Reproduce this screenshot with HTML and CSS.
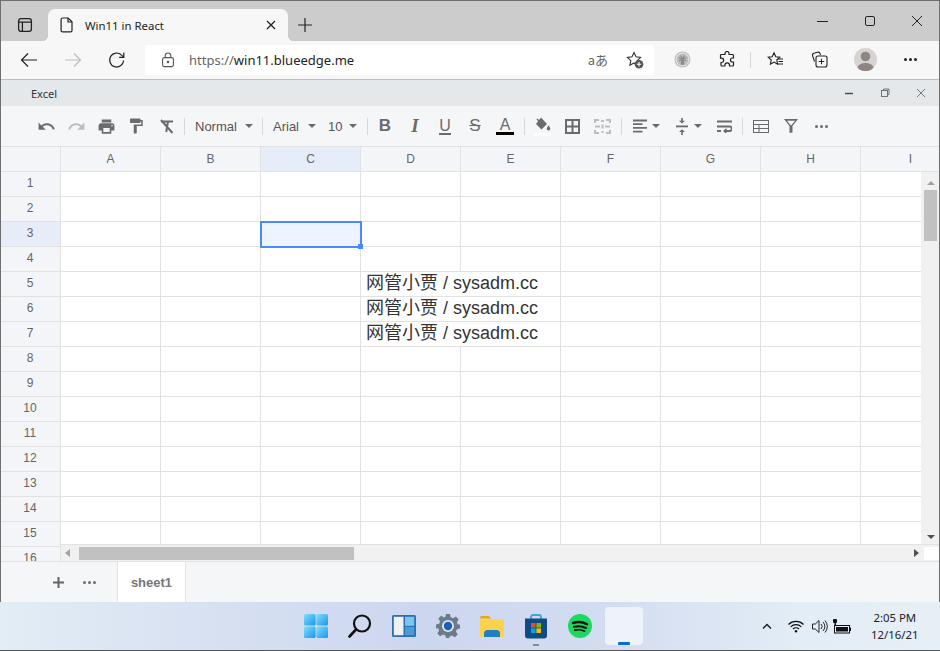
FILE: index.html
```html
<!DOCTYPE html>
<html lang="en">
<head>
    <meta charset="UTF-8">
    <meta name="viewport" content="width=device-width, initial-scale=1.0">
    <title>Win11 in React</title>
    <link rel="stylesheet" href="styles.css">
</head>
<body>
<div class="desktop">
    <div class="browser">
        <!-- tab strip -->
        <div class="tab-strip">
            <svg class="tab-panel-icon" width="16" height="16" viewBox="0 0 16 16" fill="none" stroke="#222" stroke-width="1.3"><rect x="1.6" y="1.6" width="12.8" height="12.8" rx="2.4"/><path d="M1.6 5.2h12.8M5.4 5.2v9.2"/></svg>
            <div class="tab">
                <svg width="14" height="16" viewBox="0 0 14 16" fill="none" stroke="#222" stroke-width="1.2"><path d="M2.6 1h5.6L12 4.8V13.4a1.5 1.5 0 0 1-1.5 1.5H2.6a1.5 1.5 0 0 1-1.5-1.5V2.5A1.5 1.5 0 0 1 2.6 1z"/><path d="M8 1v4h4"/></svg>
                <span class="tab-title">Win11 in React</span>
                <svg class="tab-close" width="10" height="10" viewBox="0 0 10 10" stroke="#222" stroke-width="1.3"><path d="M1 1l8 8M9 1l-8 8"/></svg>
            </div>
            <svg class="tab-new" width="16" height="16" viewBox="0 0 16 16" stroke="#222" stroke-width="1.2"><path d="M8 1v14M1 8h14"/></svg>
            <div class="win-controls">
                <svg width="12" height="12" viewBox="0 0 12 12" stroke="#222" stroke-width="1"><path d="M0 6.500h11"/></svg>
                <svg width="12" height="12" viewBox="0 0 12 12" fill="none" stroke="#222" stroke-width="1"><rect x="1.500" y="1.500" width="9" height="9" rx="1.500"/></svg>
                <svg width="12" height="12" viewBox="0 0 12 12" stroke="#222" stroke-width="1"><path d="M1 1l10 10M11 1L1 11"/></svg>
            </div>
        </div>

        <!-- address bar -->
        <div class="address-row">
            <svg class="nav-btn" width="18" height="16" viewBox="0 0 18 16" fill="none" stroke="#222" stroke-width="1.2"><path d="M17 8H1.5M8 1.5L1.5 8 8 14.5"/></svg>
            <svg class="nav-btn" width="18" height="16" viewBox="0 0 18 16" fill="none" stroke="#bdbdbd" stroke-width="1.2"><path d="M1 8h15.5M10 1.5L16.5 8 10 14.5"/></svg>
            <svg class="nav-btn" width="18" height="18" viewBox="0 0 18 18" fill="none" stroke="#222" stroke-width="1.2"><path d="M15.6 9.5a7 7 0 1 1-2-5.4l2.2 2.2"/><path d="M15.8 1.6v4.7h-4.7"/></svg>
            <div class="url-box">
                <svg width="14" height="16" viewBox="0 0 14 16" fill="none" stroke="#555" stroke-width="1.1"><rect x="1.6" y="5.6" width="10.8" height="9" rx="1.6"/><path d="M4.2 5.6V3.8a2.8 2.8 0 0 1 5.6 0v1.8"/><circle cx="7" cy="10" r=".8" fill="#555"/></svg>
                <span class="url"><span class="url-scheme">https://</span>win11.blueedge.me</span>
                <span class="translate">aあ</span>
                <svg class="fav-add" width="18" height="18" viewBox="0 0 18 18"><path d="M8 1.5l2 4.3 4.6.6-3.4 3.2.9 4.6L8 11.9l-4.1 2.3.9-4.6L1.400 6.400 6 5.800z" fill="none" stroke="#333" stroke-width="1.1"/><circle cx="13" cy="13.200" r="4.300" fill="#555"/><path d="M13 11v4.400M10.800 13.200h4.400" stroke="#fff" stroke-width="1.100"/></svg>
            </div>
            <div class="browser-tools">
                <svg class="tool-palm" width="17" height="17" viewBox="0 0 17 17"><circle cx="8.500" cy="8.500" r="8" fill="#bdbdbd"/><circle cx="8.500" cy="8.500" r="6.400" fill="none" stroke="#f4f4f4" stroke-width=".8"/><path d="M8 8h1l.6 5H7.400zM8.500 8L4.500 6.500M8.500 8l4-1.500M8.500 8L5 10M8.500 8l3.500 2M8.500 8L6.500 4.500M8.500 8l2-3.500" stroke="#8c8c8c" stroke-width="1.300" fill="#8c8c8c"/></svg>
                <svg class="tool-puzzle" width="16" height="17" viewBox="0 0 16 17" fill="none" stroke="#222" stroke-width="1.200"><path d="M6 2.500a2 2 0 0 1 4 0V3.500h3.500a1 1 0 0 1 1 1V7h-1a2 2 0 0 0 0 4h1v3a1 1 0 0 1-1 1H10.500v-.8a2.300 2.300 0 0 0-4.600 0v.8H3a1 1 0 0 1-1-1V11.500h.5a2.200 2.200 0 0 0 0-4.400H1.500V4.500a1 1 0 0 1 1-1H6z"/></svg>
                <span class="tool-sep"></span>
                <svg class="tool-favs" width="17" height="17" viewBox="0 0 17 17" fill="none" stroke="#222" stroke-width="1.100"><path d="M7 1.800l1.800 3.900 4 .5-3 2.800.8 4.200L7 11.100l-3.600 2.100.8-4.200-3-2.800 4-.5z"/><path d="M11 8h5M11.500 10.500h4.500M10.500 13h5.500"/></svg>
                <svg class="tool-coll" width="17" height="17" viewBox="0 0 17 17" fill="none" stroke="#222" stroke-width="1.100"><path d="M3.500 10.500L1.600 4.800a2 2 0 0 1 1.300-2.500l3.600-1.100a2 2 0 0 1 2.400 1L9.500 4"/><rect x="5" y="5" width="11" height="11" rx="2"/><path d="M10.500 7.800v5.400M7.800 10.500h5.400"/></svg>
                <svg class="tool-avatar" width="23" height="23" viewBox="0 0 23 23"><clipPath id="av"><circle cx="11.500" cy="11.500" r="11.500"/></clipPath><circle cx="11.500" cy="11.500" r="11.500" fill="#d6d3d1"/><g clip-path="url(#av)" fill="#8d8682"><circle cx="11.500" cy="8.500" r="4.800"/><ellipse cx="11.500" cy="20" rx="8" ry="5"/></g></svg>
                <span class="tool-more"><i></i><i></i><i></i></span>
            </div>
        </div>

        <!-- excel window title -->
        <div class="app-title">
            <span>Excel</span>
            <div class="app-controls">
                <svg width="10" height="10" viewBox="0 0 10 10" stroke="#444" stroke-width="1.400"><path d="M1 5.500h8"/></svg>
                <svg width="10" height="10" viewBox="0 0 10 10" fill="none" stroke="#666" stroke-width=".9"><rect x="1.500" y="2.500" width="6" height="6"/><path d="M3.500 2.500V1h5.500v5.500H7.500"/></svg>
                <svg width="10" height="10" viewBox="0 0 10 10" stroke="#777" stroke-width="1"><path d="M1 1l8 8M9 1L1 9"/></svg>
            </div>
        </div>

        <!-- sheet toolbar -->
        <div class="toolbar">
            <span class="btn"><svg width="19" height="19" viewBox="0 0 24 24" fill="#6b6b6b"><path d="M12.500 8c-2.650 0-5.050.99-6.900 2.600L2 7v9h9l-3.620-3.620c1.390-1.160 3.160-1.880 5.120-1.880 3.540 0 6.550 2.310 7.600 5.500l2.370-.78C21.080 11.030 17.150 8 12.500 8z"/></svg></span>
            <span class="btn"><svg width="19" height="19" viewBox="0 0 24 24" fill="#bdbdbd"><path d="M18.400 10.600C16.550 8.990 14.150 8 11.500 8c-4.650 0-8.580 3.030-9.960 7.220L3.900 16c1.050-3.190 4.050-5.500 7.600-5.500 1.950 0 3.730.72 5.120 1.880L13 16h9V7l-3.600 3.600z"/></svg></span>
            <span class="btn"><svg width="19" height="19" viewBox="0 0 24 24" fill="#6b6b6b"><path d="M19 8H5c-1.660 0-3 1.340-3 3v6h4v4h12v-4h4v-6c0-1.660-1.340-3-3-3zm-3 11H8v-5h8v5zm3-7c-.55 0-1-.45-1-1s.45-1 1-1 1 .45 1 1-.45 1-1 1zm-1-9H6v4h12V3z"/></svg></span>
            <span class="btn"><svg width="18" height="18" viewBox="0 0 24 24" fill="#6b6b6b"><path d="M18 4V3c0-.55-.45-1-1-1H5c-.55 0-1 .45-1 1v4c0 .55.45 1 1 1h12c.55 0 1-.45 1-1V6h1v4H9v11c0 .55.45 1 1 1h2c.55 0 1-.45 1-1v-9h8V4h-3z"/></svg></span>
            <span class="btn"><svg width="15" height="15" viewBox="0 0 15 15" fill="none" stroke="#6b6b6b" stroke-width="2"><path d="M2 2.500h12M9 2.500L7.200 13M2 1l11.500 13"/></svg></span>
            <span class="sep"></span>
            <span class="drop drop-style">Normal<i class="caret"></i></span>
            <span class="sep sep-flush"></span>
            <span class="drop drop-font">Arial<i class="caret"></i></span>
            <span class="drop drop-size">10<i class="caret"></i></span>
            <span class="sep sep-flush"></span>
            <span class="btn btn-first"><b class="glyph">B</b></span>
            <span class="btn"><b class="glyph glyph-i">I</b></span>
            <span class="btn"><b class="glyph glyph-u">U</b></span>
            <span class="btn"><b class="glyph glyph-s">S</b></span>
            <span class="btn"><b class="glyph glyph-a">A</b></span>
            <span class="sep sep-wide"></span>
            <span class="btn btn-first"><svg width="17" height="20" viewBox="0 0 17 20"><path d="M7 1.500L13 8l-5.500 5.500L2 8z" fill="#6b6b6b"/><path d="M3 3l2.500 2.500" stroke="#6b6b6b" stroke-width="1.500"/><path d="M14.500 9.500s1.800 2 1.800 3.200a1.800 1.800 0 0 1-3.600 0c0-1.200 1.800-3.200 1.800-3.200z" fill="#6b6b6b"/><rect x="0" y="17" width="17" height="3" fill="#fff"/></svg></span>
            <span class="btn"><svg width="15" height="15" viewBox="0 0 15 15" fill="none" stroke="#6b6b6b" stroke-width="2"><rect x="1" y="1" width="13" height="13"/><path d="M7.500 1v13M1 7.500h13"/></svg></span>
            <span class="btn"><svg width="17" height="15" viewBox="0 0 17 15" fill="none" stroke="#bdbdbd" stroke-width="2"><path d="M5 1H1v3M12 1h4v3M5 14H1v-3M12 14h4v-3M1 7.500h5M11 7.500h5M8 1v2M9 1v2M8.500 5.500v4M8.500 12v2"/></svg></span>
            <span class="sep sep-wide"></span>
            <span class="drop drop-align"><svg width="14" height="14" viewBox="0 0 14 14" stroke="#6b6b6b" stroke-width="1.800"><path d="M0 1.500h14M0 5.200h9.500M0 8.900h14M0 12.600h9.500"/></svg><i class="caret"></i></span>
            <span class="drop drop-valign"><svg width="12" height="17" viewBox="0 0 12 17" fill="#6b6b6b"><path d="M0 7.500h12v1.800H0z"/><path d="M6 5.500L3 2.800h2.200V0h1.600v2.800H9zM6 11.300l3 2.800H6.800V17H5.200v-2.900H3z"/></svg><i class="caret"></i></span>
            <span class="btn"><svg width="15" height="13" viewBox="0 0 15 13" fill="none" stroke="#6b6b6b" stroke-width="1.800"><path d="M0 1.500h15M0 6.500h12.500a2 2 0 0 1 0 4.500H8M0 11h4"/><path d="M9.500 8.800L7 11l2.500 2.200" stroke-width="1.300"/></svg></span>
            <span class="sep"></span>
            <span class="btn btn-first-s"><svg width="16" height="13" viewBox="0 0 16 13" fill="none" stroke="#6b6b6b" stroke-width="1"><rect x=".5" y=".5" width="15" height="12"/><path d="M.5 4.500h15M.5 8.500h15M6 4.500v8"/></svg></span>
            <span class="btn"><svg width="14" height="14" viewBox="0 0 14 14" fill="#6b6b6b"><path d="M0 0h14L8.500 7v6.500L5.500 14V7zM3 1.800l3.600 4.500h.8L11 1.800z"/></svg></span>
            <span class="btn"><span class="dots"><i></i><i></i><i></i></span></span>
        </div>

        <!-- sheet -->
        <div class="sheet">
            <div class="grid">
                <div class="ch"></div><div class="ch">A</div><div class="ch">B</div><div class="ch on">C</div><div class="ch">D</div><div class="ch">E</div><div class="ch">F</div><div class="ch">G</div><div class="ch">H</div><div class="ch">I</div>
                <div class="rh">1</div><div class="c"></div><div class="c"></div><div class="c"></div><div class="c"></div><div class="c"></div><div class="c"></div><div class="c"></div><div class="c"></div><div class="c"></div>
                <div class="rh">2</div><div class="c"></div><div class="c"></div><div class="c"></div><div class="c"></div><div class="c"></div><div class="c"></div><div class="c"></div><div class="c"></div><div class="c"></div>
                <div class="rh on">3</div><div class="c"></div><div class="c"></div><div class="c selected"><span class="selection"><i class="handle"></i></span></div><div class="c"></div><div class="c"></div><div class="c"></div><div class="c"></div><div class="c"></div><div class="c"></div>
                <div class="rh">4</div><div class="c"></div><div class="c"></div><div class="c"></div><div class="c"></div><div class="c"></div><div class="c"></div><div class="c"></div><div class="c"></div><div class="c"></div>
                <div class="rh">5</div><div class="c"></div><div class="c"></div><div class="c"></div><div class="c wide">网管小贾 / sysadm.cc</div><div class="c"></div><div class="c"></div><div class="c"></div><div class="c"></div>
                <div class="rh">6</div><div class="c"></div><div class="c"></div><div class="c"></div><div class="c wide">网管小贾 / sysadm.cc</div><div class="c"></div><div class="c"></div><div class="c"></div><div class="c"></div>
                <div class="rh">7</div><div class="c"></div><div class="c"></div><div class="c"></div><div class="c wide">网管小贾 / sysadm.cc</div><div class="c"></div><div class="c"></div><div class="c"></div><div class="c"></div>
                <div class="rh">8</div><div class="c"></div><div class="c"></div><div class="c"></div><div class="c"></div><div class="c"></div><div class="c"></div><div class="c"></div><div class="c"></div><div class="c"></div>
                <div class="rh">9</div><div class="c"></div><div class="c"></div><div class="c"></div><div class="c"></div><div class="c"></div><div class="c"></div><div class="c"></div><div class="c"></div><div class="c"></div>
                <div class="rh">10</div><div class="c"></div><div class="c"></div><div class="c"></div><div class="c"></div><div class="c"></div><div class="c"></div><div class="c"></div><div class="c"></div><div class="c"></div>
                <div class="rh">11</div><div class="c"></div><div class="c"></div><div class="c"></div><div class="c"></div><div class="c"></div><div class="c"></div><div class="c"></div><div class="c"></div><div class="c"></div>
                <div class="rh">12</div><div class="c"></div><div class="c"></div><div class="c"></div><div class="c"></div><div class="c"></div><div class="c"></div><div class="c"></div><div class="c"></div><div class="c"></div>
                <div class="rh">13</div><div class="c"></div><div class="c"></div><div class="c"></div><div class="c"></div><div class="c"></div><div class="c"></div><div class="c"></div><div class="c"></div><div class="c"></div>
                <div class="rh">14</div><div class="c"></div><div class="c"></div><div class="c"></div><div class="c"></div><div class="c"></div><div class="c"></div><div class="c"></div><div class="c"></div><div class="c"></div>
                <div class="rh">15</div><div class="c"></div><div class="c"></div><div class="c"></div><div class="c"></div><div class="c"></div><div class="c"></div><div class="c"></div><div class="c"></div><div class="c"></div>
                <div class="rh">16</div><div class="c"></div><div class="c"></div><div class="c"></div><div class="c"></div><div class="c"></div><div class="c"></div><div class="c"></div><div class="c"></div><div class="c"></div>
            </div>
            <div class="vbar">
                <i class="arrow-up"></i>
                <span class="vthumb"></span>
                <i class="arrow-down"></i>
            </div>
            <div class="hbar">
                <i class="arrow-left"></i>
                <span class="hthumb"></span>
                <i class="arrow-right"></i>
                <span class="hcorner"></span>
            </div>
        </div>

        <!-- sheet tabs -->
        <div class="sheet-tabs">
            <svg class="sheet-add" width="11" height="11" viewBox="0 0 11 11" stroke="#666" stroke-width="2"><path d="M5.500 0v11M0 5.500h11"/></svg>
            <span class="dots sheet-more"><i></i><i></i><i></i></span>
            <span class="sheet-tab">sheet1</span>
        </div>
    </div>

    <!-- windows taskbar -->
    <div class="taskbar">
        <div class="task-icons">
            <svg width="24" height="24" viewBox="0 0 24 24"><defs><linearGradient id="st" x1="0" y1="0" x2="1" y2="1"><stop offset="0" stop-color="#7fe0fb"/><stop offset="1" stop-color="#1a94f0"/></linearGradient></defs><rect x="0" y="0" width="11.600" height="11.600" rx="1.500" fill="url(#st)"/><rect x="12.400" y="0" width="11.600" height="11.600" rx="1.500" fill="url(#st)"/><rect x="0" y="12.400" width="11.600" height="11.600" rx="1.500" fill="url(#st)"/><rect x="12.400" y="12.400" width="11.600" height="11.600" rx="1.500" fill="url(#st)"/></svg>
            <svg width="24" height="24" viewBox="0 0 24 24" fill="none" stroke="#111"><circle cx="14" cy="9.500" r="8" stroke-width="2.200"/><path d="M8 15.500L1.500 22.500" stroke-width="2.600" stroke-linecap="round"/></svg>
            <svg width="24" height="24" viewBox="0 0 24 24"><rect width="24" height="22" y="1" rx="1.500" fill="#2f6fb1"/><rect x="1.800" y="2.800" width="9.700" height="18.400" fill="#eef2f6"/><rect x="13" y="2.800" width="9.200" height="9" fill="#79c6ee"/><rect x="13" y="13" width="9.200" height="8.200" fill="#4a9bd8"/></svg>
            <svg width="24" height="24" viewBox="0 0 24 24"><path d="M10 0h4l.7 3.300 2.300 1 2.900-1.800 2.800 2.800-1.800 2.900 1 2.300L24 10.500v4l-3.100.7-1 2.300 1.800 2.900-2.800 2.800-2.900-1.800-2.300 1L13 24h-3l-.7-2.600-2.300-1-2.900 1.800-2.800-2.800 1.800-2.900-1-2.300L0 14.500v-4l3.100-.7 1-2.300L2.300 4.600l2.800-2.800L8 3.600l1.300-.6z" fill="#6d7b86"/><circle cx="12" cy="12" r="6" fill="#dfe6ef"/><circle cx="12" cy="12" r="4.200" fill="#1c5fb8"/></svg>
            <svg width="24" height="24" viewBox="0 0 24 24"><path d="M0 4a2 2 0 0 1 2-2h6.500l3 2.500H0z" fill="#e8a800"/><path d="M0 5.500h22a2 2 0 0 1 2 2V22a1 1 0 0 1-1 1H1a1 1 0 0 1-1-1z" fill="#fbd24e"/><path d="M4 23v-3.500a3.500 3.500 0 0 1 3.500-3.500h9a3.500 3.500 0 0 1 3.500 3.500V23z" fill="#1f80c8"/></svg>
            <span class="task-store">
                <svg width="24" height="25" viewBox="0 0 24 25"><path d="M7 5V3a2 2 0 0 1 2-2h6a2 2 0 0 1 2 2v2" fill="none" stroke="#38a3e0" stroke-width="1.800"/><path d="M1 4.500h22v17a3 3 0 0 1-3 3H4a3 3 0 0 1-3-3z" fill="#0f4c86"/><rect x="7" y="9" width="4.600" height="4.600" fill="#e84c2a"/><rect x="12.400" y="9" width="4.600" height="4.600" fill="#7fba00"/><rect x="7" y="14.400" width="4.600" height="4.600" fill="#00a4ef"/><rect x="12.400" y="14.400" width="4.600" height="4.600" fill="#ffb900"/></svg>
                <i class="task-dot"></i>
            </span>
            <svg width="24" height="24" viewBox="0 0 24 24"><circle cx="12" cy="12" r="12" fill="#1ed760"/><path d="M5 9c4.500-1.400 10-1 14 1.300" fill="none" stroke="#111" stroke-width="2.400" stroke-linecap="round"/><path d="M6 12.800c4-1.100 8.500-.7 12 1.200" fill="none" stroke="#111" stroke-width="2" stroke-linecap="round"/><path d="M6.800 16.200c3.300-.8 7-.5 9.800 1" fill="none" stroke="#111" stroke-width="1.700" stroke-linecap="round"/></svg>
            <span class="task-active"><i></i></span>
        </div>
        <div class="tray">
            <svg class="tray-caret" width="10" height="6" viewBox="0 0 10 6" fill="none" stroke="#222" stroke-width="1.500"><path d="M1 5.500l4-4 4 4"/></svg>
            <svg class="tray-wifi" width="16" height="13" viewBox="0 0 16 13" fill="none" stroke="#111" stroke-width="1.200"><path d="M.5 4.500a10.500 10.500 0 0 1 15 0M2.700 6.800a7.500 7.500 0 0 1 10.600 0M5 9a4.300 4.300 0 0 1 6 0"/><circle cx="8" cy="11.200" r="1.200" fill="#111" stroke="none"/></svg>
            <svg class="tray-vol" width="16" height="15" viewBox="0 0 16 15" fill="none" stroke="#222" stroke-width="1"><path d="M.5 5v5h2.800l3.700 3.500V1.500L3.300 5z"/><path d="M9 5a3.500 3.500 0 0 1 0 5M11 3a6.500 6.500 0 0 1 0 9M13 1.500a9 9 0 0 1 0 12"/></svg>
            <svg class="tray-batt" width="18" height="15" viewBox="0 0 18 15"><rect x="0" y="0" width="4" height="4" rx="1" fill="#111"/><rect x="1.500" y="4" width="1.500" height="3" fill="#111"/><rect x="1.500" y="6.500" width="15" height="7.500" fill="none" stroke="#111"/><rect x="3" y="8" width="12" height="4.500" fill="#111"/><rect x="17" y="8.500" width="1" height="3.500" fill="#111"/></svg>
            <div class="clock"><span>2:05 PM</span><span>12/16/21</span></div>
        </div>
    </div>
</div>
</body>
</html>
```

FILE: styles.css
```css
* {
    box-sizing: border-box;
}

body {
    margin: 0;
    padding: 0;
    font-family: "Liberation Sans", Arial, sans-serif;
    overflow: hidden;
}

i {
    font-style: normal;
}

.desktop {
    width: 940px;
    height: 651px;
    display: flex;
    flex-direction: column;
    overflow: hidden;
}

.browser {
    position: relative;
    display: flex;
    flex-direction: column;
    height: 602px;
    background-color: #fff;
}

/* thin window frame painted over the content */
.browser::after {
    content: "";
    position: absolute;
    top: 0;
    left: 0;
    right: 0;
    bottom: 0;
    border: 1px solid #6f6f6f;
    border-bottom: none;
    pointer-events: none;
}

/* tab strip */
.tab-strip {
    display: flex;
    align-items: flex-end;
    height: 41px;
    padding-left: 17px;
    background-color: #cccccc;
}

.tab-panel-icon {
    margin-bottom: 8px;
}

.tab {
    position: relative;
    display: flex;
    align-items: center;
    width: 240px;
    height: 32px;
    margin-left: 15px;
    padding-left: 12px;
    background-color: #f7f7f7;
    border-radius: 7px 7px 0 0;
}

.tab::before,
.tab::after {
    content: "";
    position: absolute;
    bottom: 0;
    width: 6px;
    height: 6px;
}

.tab::before {
    left: -6px;
    background: radial-gradient(circle at 0 0, transparent 6px, #f7f7f7 6.5px);
}

.tab::after {
    right: -6px;
    background: radial-gradient(circle at 100% 0, transparent 6px, #f7f7f7 6.5px);
}

.tab-title {
    margin-left: 11px;
    font-family: "Noto Sans", sans-serif;
    font-size: 11.4px;
    color: #222;
}

.tab-close {
    margin-left: auto;
    margin-right: 12px;
}

.tab-new {
    margin-left: 9px;
    margin-bottom: 8px;
}

.win-controls {
    display: flex;
    gap: 35px;
    margin-left: auto;
    margin-right: 17px;
    margin-bottom: 14px;
}

/* address bar */
.address-row {
    display: flex;
    align-items: center;
    height: 39px;
    padding: 0 0 1px 20px;
    background-color: #f7f7f7;
    border-bottom: 1px solid #bdbdbd;
}

.nav-btn {
    margin-right: 26px;
}

.nav-btn:nth-child(3) {
    margin-right: 19px;
}

.url-box {
    display: flex;
    align-items: center;
    width: 509px;
    height: 30px;
    padding-left: 16px;
    background-color: #fff;
    border-radius: 4px;
}

.url {
    margin-left: 14px;
    font-family: "Noto Sans", sans-serif;
    font-size: 13px;
    color: #222;
}

.url-scheme {
    color: #666;
}

.translate {
    margin-left: auto;
    font-family: "Noto Sans CJK JP", sans-serif;
    font-size: 13px;
    color: #666;
}

.fav-add {
    margin-left: 18px;
    margin-right: 10px;
}

.browser-tools {
    position: relative;
    display: flex;
    align-items: center;
    margin-left: 20px;
}

.tool-puzzle {
    margin-left: 28px;
}

.tool-sep {
    width: 1px;
    height: 16px;
    margin-left: 15px;
    background-color: #d4d4d4;
}

.tool-favs {
    margin-left: 16px;
}

.tool-coll {
    margin-left: 27px;
}

.tool-avatar {
    margin-left: 26px;
}

.tool-more {
    display: flex;
    gap: 2px;
    margin-left: 27px;
}

.tool-more i {
    width: 3px;
    height: 3px;
    border-radius: 50%;
    background-color: #222;
}

/* excel title */
.app-title {
    display: flex;
    align-items: center;
    height: 26px;
    padding-left: 31px;
    font-family: "Noto Sans", sans-serif;
    font-size: 11px;
    color: #333;
    background-color: #e5e8eb;
}

.app-controls {
    display: flex;
    gap: 26px;
    margin-left: auto;
    margin-right: 14px;
}

/* toolbar */
.toolbar {
    display: flex;
    align-items: center;
    height: 41px;
    padding-left: 31px;
    background-color: #f5f6f8;
    border-bottom: 1px solid #e2e2e3;
    font-size: 13px;
    color: #555;
}

.btn {
    display: flex;
    align-items: center;
    justify-content: center;
    flex: none;
    width: 30px;
    height: 26px;
}

.btn-first {
    margin-left: 2px;
}

.btn-first-s {
    margin-left: 3px;
}

.sep {
    flex: none;
    width: 1px;
    height: 17px;
    margin-left: 3px;
    background-color: #d8d8da;
}

.sep-flush {
    margin-left: 0;
}

.sep-wide {
    margin-left: 4px;
}

.drop {
    display: flex;
    align-items: center;
    flex: none;
    height: 26px;
}

.caret {
    width: 0;
    height: 0;
    border-left: 4px solid transparent;
    border-right: 4px solid transparent;
    border-top: 4px solid #6b6b6b;
}

.drop-style {
    width: 77px;
    padding-left: 10px;
    gap: 8px;
}

.drop-font {
    width: 59px;
    padding-left: 10px;
    gap: 9px;
}

.drop-size {
    width: 45px;
    padding-left: 6px;
    gap: 7px;
}

.drop-align {
    width: 40px;
    padding-left: 11px;
    gap: 5px;
    margin-left: 0;
}

.drop-valign {
    width: 47px;
    padding-left: 14px;
    gap: 6px;
}

.glyph {
    font-size: 17px;
    line-height: 20px;
    color: #6b6b6b;
}

.glyph-i {
    font-family: "Liberation Serif", serif;
    font-style: italic;
    font-size: 19px;
}

.glyph-u {
    font-weight: 400;
    font-size: 16px;
    border-bottom: 2px solid #6b6b6b;
    line-height: 15px;
}

.glyph-s {
    font-weight: 400;
    font-size: 17px;
    text-decoration: line-through;
}

.glyph-a {
    font-weight: 400;
    font-size: 16px;
    width: 18px;
    text-align: center;
    line-height: 15px;
    border-bottom: 3px solid #000;
}

.dots {
    display: flex;
    gap: 2px;
}

.dots i {
    width: 3px;
    height: 3px;
    border-radius: 50%;
    background-color: #6b6b6b;
}

/* sheet grid */
.sheet {
    position: relative;
    height: 414px;
    overflow: hidden;
}

.grid {
    display: grid;
    grid-template-columns: 61px repeat(9, 100px);
    grid-auto-rows: 25px;
    width: 961px;
}

.ch,
.rh {
    display: flex;
    align-items: center;
    justify-content: center;
    font-size: 12px;
    color: #666;
    background-color: #f4f5f8;
    border-right: 1px solid #e2e2e3;
    border-bottom: 1px solid #e2e2e3;
}

.rh {
    padding-bottom: 2px;
}

.ch.on,
.rh.on {
    background-color: #e6ecf8;
}

.c {
    border-right: 1px solid #e2e2e3;
    border-bottom: 1px solid #e2e2e3;
    background-color: #fff;
}

.wide {
    grid-column: span 2;
    padding-left: 5px;
    font-family: "Liberation Sans", "Noto Sans CJK SC", sans-serif;
    font-size: 18px;
    line-height: 22px;
    color: #333;
    white-space: nowrap;
}

.selected {
    position: relative;
}

.selection {
    position: absolute;
    top: -1px;
    left: -1px;
    right: -2px;
    bottom: -2px;
    border: 2px solid #4b89ff;
    background-color: rgba(75, 137, 255, 0.1);
}

.handle {
    position: absolute;
    right: -3px;
    bottom: -3px;
    width: 5px;
    height: 5px;
    background-color: #4b89ff;
}

/* scroll bars */
.vbar {
    position: absolute;
    top: 25px;
    right: 0;
    bottom: 17px;
    width: 19px;
    display: flex;
    flex-direction: column;
    align-items: center;
    background-color: #f1f1f1;
}

.arrow-up {
    margin-top: 9px;
    width: 0;
    height: 0;
    border-left: 4px solid transparent;
    border-right: 4px solid transparent;
    border-bottom: 4px solid #a3a3a3;
}

.vthumb {
    width: 13px;
    height: 51px;
    margin-top: 5px;
    background-color: #c1c1c1;
}

.arrow-down {
    margin-top: auto;
    margin-bottom: 5px;
    width: 0;
    height: 0;
    border-left: 4px solid transparent;
    border-right: 4px solid transparent;
    border-top: 4px solid #505050;
}

.hbar {
    position: absolute;
    left: 61px;
    right: 0;
    bottom: 0;
    height: 17px;
    display: flex;
    align-items: center;
    background-color: #f1f1f1;
    border-top: 1px solid #e2e2e3;
}

.arrow-left {
    margin-left: 4px;
    margin-right: 9px;
    width: 0;
    height: 0;
    border-top: 4px solid transparent;
    border-bottom: 4px solid transparent;
    border-right: 5px solid #a3a3a3;
}

.hthumb {
    width: 275px;
    height: 13px;
    background-color: #c1c1c1;
}

.arrow-right {
    margin-left: auto;
    margin-right: 5px;
    width: 0;
    height: 0;
    border-top: 4px solid transparent;
    border-bottom: 4px solid transparent;
    border-left: 5px solid #505050;
}

.hcorner {
    width: 16px;
    height: 13px;
    background-color: #fff;
}

/* sheet tabs */
.sheet-tabs {
    display: flex;
    align-items: center;
    height: 41px;
    padding-left: 53px;
    background-color: #f5f6f8;
    border-top: 1px solid #e2e2e3;
}

.sheet-more {
    margin-left: 19px;
}

.sheet-tab {
    align-self: stretch;
    display: flex;
    align-items: center;
    justify-content: center;
    width: 69px;
    margin-left: 21px;
    font-size: 13px;
    font-weight: bold;
    color: #777;
    background-color: #fff;
    border-left: 1px solid #e2e2e3;
    border-right: 1px solid #e2e2e3;
}

/* taskbar */
.taskbar {
    display: flex;
    align-items: center;
    height: 49px;
    padding-left: 304px;
    background: linear-gradient(90deg, #e3edf5 0%, #d8e2f2 20%, #cdd6ef 45%, #d3ddf1 65%, #e3edf5 85%, #e6eff5 100%);
    border-bottom: 1px solid #555;
}

.task-icons {
    display: flex;
    align-items: center;
    gap: 20px;
}

.task-store {
    position: relative;
    display: flex;
}

.task-dot {
    position: absolute;
    left: 9px;
    bottom: -7px;
    width: 6px;
    height: 2px;
    background-color: #888;
}

.task-active {
    position: relative;
    width: 38px;
    height: 38px;
    margin-left: -7px;
    background-color: #eef2fa;
    border-radius: 4px;
}

.task-active i {
    position: absolute;
    left: 13px;
    bottom: 0;
    width: 12px;
    height: 3px;
    background-color: #0b6cd0;
    border-radius: 1px;
}

.tray {
    display: flex;
    align-items: center;
    margin-left: 119px;
}

.tray-wifi {
    margin-left: 16px;
}

.tray-vol {
    margin-left: 8px;
}

.tray-batt {
    margin-left: 5px;
}

.clock {
    display: flex;
    flex-direction: column;
    align-items: center;
    margin-left: 20px;
    font-family: "Noto Sans", sans-serif;
    font-size: 11.4px;
    line-height: 17px;
    color: #222;
}
```
